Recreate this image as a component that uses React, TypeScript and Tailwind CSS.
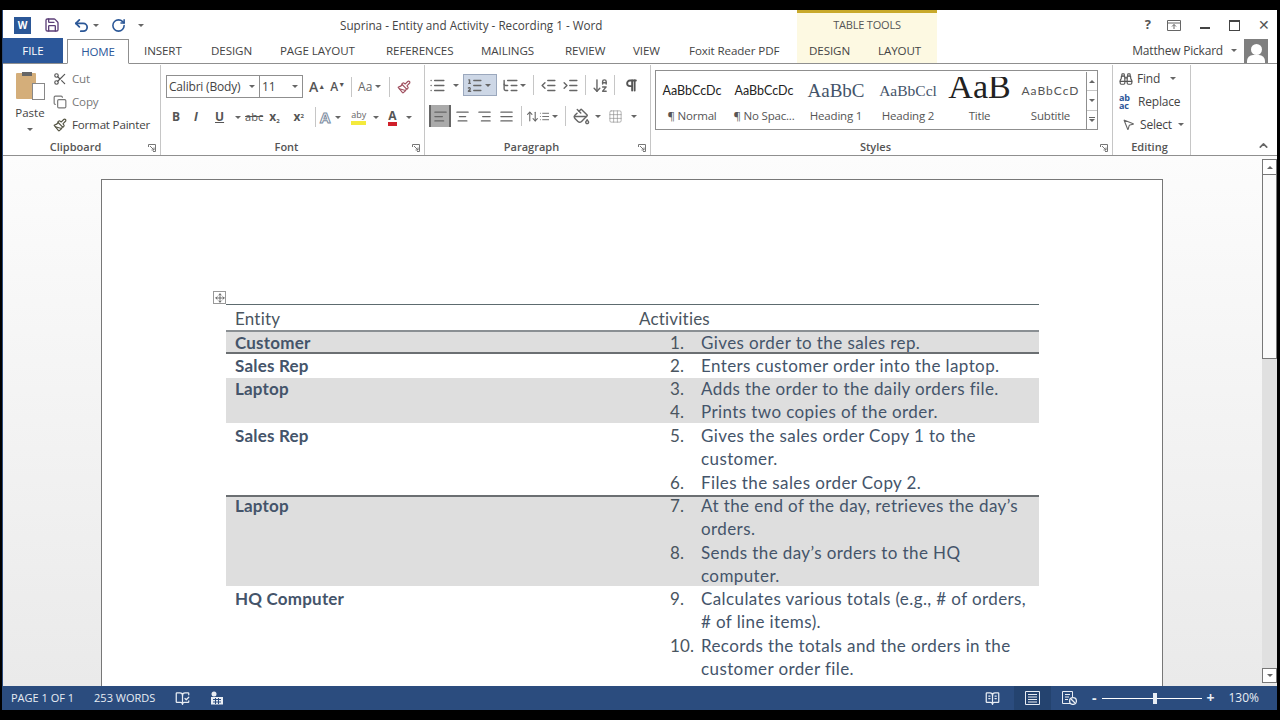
import type { ReactNode } from 'react';
import {
  AlignCenter,
  AlignJustify,
  AlignLeft,
  AlignRight,
  ArrowDownAZ,
  ArrowUpDown,
  Binoculars,
  BookOpenCheck,
  BookOpenText,
  ChevronUp,
  Copy,
  Grid3x3,
  IndentDecrease,
  IndentIncrease,
  List,
  ListOrdered,
  ListTree,
  MousePointer2,
  Move,
  PaintBucket,
  Paintbrush,
  Pilcrow,
  RotateCw,
  Save,
  Scissors,
  Undo2,
} from 'lucide-react';

const UI = 'font-["Open_Sans","Liberation_Sans",sans-serif]';
const DOC = 'font-["Lato","Liberation_Sans",sans-serif]';

function Caret({ className = '' }: { className?: string }) {
  return <span className={`inline-block h-0 w-0 shrink-0 border-x-[3px] border-t-[3px] border-x-transparent border-t-[#666] ${className}`} />;
}

function Launcher() {
  return (
    <svg width="8" height="8" viewBox="0 0 8 8" className="shrink-0 text-[#777]">
      <path d="M.5 3V.5H7.5V7.5H5M2 2l4 4M6 3.5V6H3.5" fill="none" stroke="currentColor" strokeWidth="1" />
    </svg>
  );
}

function Sep({ className = '' }: { className?: string }) {
  return <span className={`h-[20px] w-px shrink-0 bg-[#c6c6c6] ${className}`} />;
}

function Group({ label, width, launcher, children }: { label: string; width: string; launcher?: boolean; children: ReactNode }) {
  return (
    <div className={`${width} flex h-[90px] shrink-0 flex-col border-r border-[#c6c6c6]`}>
      <div className="min-h-0 flex-1">{children}</div>
      <div className="flex h-[15px] items-center pr-[4px] text-[11px] font-semibold text-[#555]">
        <span className="flex-1 text-center">{label}</span>
        {launcher && <Launcher />}
      </div>
    </div>
  );
}

function Tab({ children, className = '' }: { children: ReactNode; className?: string }) {
  return <span className={`text-[11.6px] tracking-[-0.1px] whitespace-nowrap text-[#444] ${className}`}>{children}</span>;
}

function StyleItem({ sample, label, w, sampleClass }: { sample: string; label: string; w: string; sampleClass: string }) {
  return (
    <div className={`${w} flex shrink-0 flex-col items-center overflow-hidden`}>
      <div className={`flex w-full items-center justify-center overflow-hidden whitespace-nowrap ${sampleClass}`}>{sample}</div>
      <div className="text-[11.5px] leading-[16px] tracking-[-0.2px] text-[#555]">{label}</div>
    </div>
  );
}

function MacroIcon() {
  return (
    <svg width="14" height="14" viewBox="0 0 14 14" className="ml-[20px]">
      <circle cx="4" cy="3" r="2.5" fill="#e8edf4" />
      <path d="M1 6h12v7.5H1z" fill="#e8edf4" />
      <path d="M3 8.5h8M3 11h8M5.5 7v6M8.5 7v6" stroke="#2b4c7e" strokeWidth="1" />
    </svg>
  );
}

function PrintIcon() {
  return (
    <svg width="15" height="14" viewBox="0 0 15 14">
      <path d="M.5.5h14v13H.5z" fill="none" stroke="#e8edf4" />
      <path d="M3 3.5h9M3 6h9M3 8.5h9M3 11h9" stroke="#e8edf4" />
    </svg>
  );
}

function WebIcon() {
  return (
    <svg width="15" height="14" viewBox="0 0 15 14" className="ml-[11px]">
      <path d="M8 12.5H.5V.5h10V6" fill="none" stroke="#e8edf4" />
      <path d="M3 3.5h5M3 6h4M3 8.5h3" stroke="#e8edf4" />
      <circle cx="11" cy="10" r="3.4" fill="none" stroke="#e8edf4" strokeWidth="1.3" />
      <path d="M9 8l4 4" stroke="#e8edf4" strokeWidth="1.2" />
    </svg>
  );
}

type Row = { n: string; lines: string[] };
type Band = { entity: string; rows: Row[]; className: string };

const BANDS: Band[] = [
  { entity: 'Customer', className: 'h-[24px] pt-[1px] bg-[#dedede] shadow-[inset_0_2px_0_#8a8f93,inset_0_-2px_0_#6b6f72]', rows: [{ n: '1.', lines: ['Gives order to the sales rep.'] }] },
  { entity: 'Sales Rep', className: 'h-[24px]', rows: [{ n: '2.', lines: ['Enters customer order into the laptop.'] }] },
  { entity: 'Laptop', className: 'h-[45px] bg-[#dedede] [&>*]:-translate-y-px', rows: [{ n: '3.', lines: ['Adds the order to the daily orders file.'] }, { n: '4.', lines: ['Prints two copies of the order.'] }] },
  { entity: 'Sales Rep', className: 'h-[72px] pt-[1px]', rows: [{ n: '5.', lines: ['Gives the sales order Copy 1 to the', 'customer.'] }, { n: '6.', lines: ['Files the sales order Copy 2.'] }] },
  { entity: 'Laptop', className: 'h-[91px] bg-[#dedede] shadow-[inset_0_2px_0_#6b6f72] [&>*]:-translate-y-px', rows: [{ n: '7.', lines: ['At the end of the day, retrieves the day’s', 'orders.'] }, { n: '8.', lines: ['Sends the day’s orders to the HQ', 'computer.'] }] },
  { entity: 'HQ Computer', className: 'h-[94px] pt-[1px]', rows: [{ n: '9.', lines: ['Calculates various totals (e.g., # of orders,', '# of line items).'] }, { n: '10.', lines: ['Records the totals and the orders in the', 'customer order file.'] }] },
];

export default function App() {
  return (
    <div className={`flex h-[720px] w-[1280px] flex-col overflow-hidden bg-black ${UI}`}>
      <div className="h-[10px] shrink-0" />
      <div className="ml-[2px] mr-[3px] flex h-[700px] flex-col border-l border-[#2b4c7e] bg-white">
        {/* title bar */}
        <div className="flex h-[28px] shrink-0 items-center pt-[2px]">
          <div className="ml-[11px] flex h-[17px] w-[17px] items-center justify-center bg-[#2b5797] text-[10px] font-bold text-white">W</div>
          <Save size={16} strokeWidth={2} className="ml-[13px] text-[#5c3f78]" />
          <Undo2 size={17} strokeWidth={2.5} className="ml-[13px] text-[#2b5797]" />
          <Caret className="ml-[3px]" />
          <RotateCw size={15} strokeWidth={2.5} className="ml-[12px] text-[#2b5797]" />
          <Caret className="ml-[12px]" />
          <div className="ml-[196px] mt-[1px] w-[300px] text-[11.7px] text-[#444]">Suprina - Entity and Activity - Recording 1 - Word</div>
          <div className="-mt-[2px] ml-[157px] flex h-[28px] w-[140px] items-center justify-center self-start border-t-[3px] border-[#c8a92b] bg-[#fdf9e2] text-[11px] tracking-[-0.2px] text-[#555]">TABLE TOOLS</div>
          <div className="ml-auto flex items-center gap-[16px] pr-[7px] text-[#555]">
            <span className="text-[13px] font-bold">?</span>
            <svg width="14" height="11" viewBox="0 0 14 11"><path d="M.5.5h13v10H.5zM.5 3h13M7 9V4.5M5 6.5l2-2 2 2" fill="none" stroke="#666" /></svg>
            <span className="ml-[3px] mt-[5px] h-[2px] w-[10px] bg-[#444]" />
            <span className="ml-[3px] h-[11px] w-[11px] border border-t-2 border-[#444]" />
            <span className="ml-[2px] text-[14px] leading-none">✕</span>
          </div>
        </div>
        {/* tabs */}
        <div className="relative flex h-[26px] shrink-0 items-end border-b border-[#8f8f8f]">
          <div className="flex h-[25px] w-[60px] items-center justify-center bg-[#2b579a] text-[11.5px] text-white">FILE</div>
          <div className="-mb-px ml-[4px] flex h-[25px] w-[62px] items-center justify-center border border-b-white border-[#8f8f8f] bg-white text-[11.5px] tracking-[-0.2px] text-[#2b579a]">HOME</div>
          <div className="flex h-[25px] items-center">
            <Tab className="ml-[15px] w-[53px]">INSERT</Tab>
            <Tab className="ml-[14px] w-[52px]">DESIGN</Tab>
            <Tab className="ml-[17px] w-[92px]">PAGE LAYOUT</Tab>
            <Tab className="ml-[14px] w-[85px]">REFERENCES</Tab>
            <Tab className="ml-[10px] w-[70px]">MAILINGS</Tab>
            <Tab className="ml-[14px] w-[54px]">REVIEW</Tab>
            <Tab className="ml-[14px] w-[42px]">VIEW</Tab>
            <Tab className="ml-[14px] w-[91px]">Foxit Reader PDF</Tab>
          </div>
          <div className="ml-[17px] flex h-[25px] w-[140px] items-center bg-[#fdf9e2]">
            <Tab className="ml-[12px] w-[40px]">DESIGN</Tab>
            <Tab className="ml-[29px]">LAYOUT</Tab>
          </div>
          <div className="ml-auto flex h-[25px] items-center pr-[9px]">
            <span className="text-[12px] tracking-[-0.2px] text-[#444]">Matthew Pickard</span>
            <Caret className="ml-[8px]" />
            <div className="ml-[7px] flex h-[24px] w-[24px] flex-col items-center justify-end overflow-hidden bg-[#7f7f7f]">
              <span className="h-[11px] w-[11px] rounded-full bg-white" />
              <span className="h-[8px] w-[18px] rounded-t-[6px] bg-white" />
            </div>
          </div>
        </div>
        {/* ribbon */}
        <div className="flex h-[92px] shrink-0 items-start border-b border-[#8f8f8f] pt-[1px] text-[#444]">
          <Group label="Clipboard" width="w-[158px]" launcher>
            <div className="flex pl-[12px] pt-[3px]">
              <div className="mt-[5px] flex w-[30px] flex-col items-center">
                <div className="relative h-[28px] w-[28px]">
                  <div className="h-[26px] w-[20px] rounded-[1px] bg-[#d4ae7a]" />
                  <div className="absolute left-[6px] top-[-1px] h-[4px] w-[10px] bg-[#666]" />
                  <div className="absolute left-[16px] top-[10px] h-[17px] w-[13px] border border-[#888] bg-white" />
                </div>
                <span className="mt-[5px] text-[11.5px] leading-[14px]">Paste</span>
                <Caret className="mt-[8px]" />
              </div>
              <div className="ml-[8px] flex flex-col gap-[4px] pt-[1px] text-[11.6px] leading-[19px] tracking-[-0.2px]">
                <div className="flex items-center gap-[5px]"><Scissors size={14} className="text-[#555]" /><span className="text-[#777]">Cut</span></div>
                <div className="flex items-center gap-[5px]"><Copy size={14} className="text-[#777]" /><span className="text-[#777]">Copy</span></div>
                <div className="flex items-center gap-[5px]"><Paintbrush size={14} className="text-[#554]" /><span>Format Painter</span></div>
              </div>
            </div>
          </Group>
          <Group label="Font" width="w-[264px]" launcher>
            <div className="pl-[5px] pt-[10px]">
              <div className="flex items-center">
                <div className="flex h-[23px] w-[94px] items-center justify-between border border-[#8f8f8f] pl-[2px] pr-[4px] text-[12px] tracking-[-0.2px]">Calibri (Body)<Caret /></div>
                <div className="-ml-px flex h-[23px] w-[44px] items-center justify-between border border-[#8f8f8f] pl-[2px] pr-[4px] text-[12px]">11<Caret /></div>
                <span className="ml-[6px] text-[14px] font-semibold text-[#555]">A<sup className="text-[7px]">▲</sup></span>
                <span className="ml-[5px] text-[12px] font-semibold text-[#555]">A<sup className="text-[7px]">▼</sup></span>
                <Sep className="ml-[6px]" />
                <span className="ml-[6px] text-[12px] text-[#666]">Aa</span>
                <Caret className="ml-[3px]" />
                <Sep className="ml-[8px]" />
                <Paintbrush size={14} className="ml-[7px] text-[#a05060]" />
              </div>
              <div className="mt-[9px] flex items-center pl-[2px] text-[#555]">
                <span className="w-[16px] text-center text-[12px] font-bold">B</span>
                <span className="ml-[6px] w-[12px] text-center text-[12px] font-bold italic">I</span>
                <span className="ml-[13px] text-[12px] font-bold underline">U</span>
                <Caret className="ml-[11px]" />
                <span className="ml-[4px] text-[11px] line-through">abc</span>
                <span className="ml-[6px] text-[12px] font-bold">x<sub className="text-[6px]">2</sub></span>
                <span className="ml-[14px] text-[12px] font-bold">x<sup className="text-[6px]">2</sup></span>
                <Sep className="ml-[11px]" />
                <span className="ml-[4px] text-[15px] font-bold leading-none text-white [-webkit-text-stroke:1px_#7b8ba0]">A</span>
                <Caret className="ml-[5px]" />
                <span className="ml-[10px] border-b-[4px] border-[#f4ea3c] text-[9px] leading-[12px] text-[#666]">aby</span>
                <Caret className="ml-[7px]" />
                <span className="ml-[9px] border-b-[4px] border-[#d0202a] text-[12px] font-bold leading-[13px] text-[#555]">A</span>
                <Caret className="ml-[9px]" />
              </div>
            </div>
          </Group>
          <Group label="Paragraph" width="w-[226px]" launcher>
            <div className="pl-[4px] pt-[8px]">
              <div className="flex h-[24px] items-center text-[#666]">
                <List size={17} />
                <Caret className="ml-[7px]" />
                <div className="ml-[4px] flex h-[22px] w-[34px] items-center gap-[2px] border border-[#9ba8bd] bg-[#cdd7e6] pl-[2px]"><ListOrdered size={17} /><Caret /></div>
                <ListTree size={17} className="ml-[5px]" />
                <Caret className="ml-[1px]" />
                <Sep className="ml-[7px]" />
                <IndentDecrease size={17} className="ml-[6px]" />
                <IndentIncrease size={17} className="ml-[5px]" />
                <Sep className="ml-[6px]" />
                <ArrowDownAZ size={17} className="ml-[6px]" />
                <Sep className="ml-[5px]" />
                <Pilcrow size={15} strokeWidth={3} className="ml-[9px] text-[#555]" />
              </div>
              <div className="mt-[7px] flex h-[24px] items-center text-[#666]">
                <div className="flex h-[22px] w-[22px] shrink-0 items-center justify-center border-x-2 border-[#666] bg-[#aaa]"><AlignLeft size={15} /></div>
                <AlignCenter size={15} className="ml-[4px]" />
                <AlignRight size={15} className="ml-[7px]" />
                <AlignJustify size={15} className="ml-[7px]" />
                <Sep className="ml-[7px]" />
                <ArrowUpDown size={13} className="ml-[4px]" />
                <List size={11} />
                <Caret className="ml-[2px]" />
                <Sep className="ml-[7px]" />
                <PaintBucket size={17} className="ml-[7px]" />
                <Caret className="ml-[5px]" />
                <Grid3x3 size={15} strokeWidth={1} className="ml-[7px] text-[#888]" />
                <Caret className="ml-[8px]" />
              </div>
            </div>
          </Group>
          <Group label="Styles" width="w-[462px]" launcher>
            <div className="ml-[4px] mt-[5px] flex h-[60px] w-[443px] border border-[#8f8f8f] pt-[1px]">
              <StyleItem w="w-[72px]" sample="AaBbCcDc" label="¶ Normal" sampleClass={`h-[36px] pt-[2px] text-[12.5px] text-[#222] ${DOC}`} />
              <StyleItem w="w-[72px]" sample="AaBbCcDc" label="¶ No Spac..." sampleClass={`h-[36px] pt-[2px] text-[12.5px] text-[#222] ${DOC}`} />
              <StyleItem w="w-[72px]" sample="AaBbC" label="Heading 1" sampleClass='h-[36px] pt-[2px] text-[19px] text-[#44546a] font-["Liberation_Serif",serif]' />
              <StyleItem w="w-[72px]" sample="AaBbCcl" label="Heading 2" sampleClass='h-[36px] pt-[2px] text-[15.5px] text-[#44546a] font-["Liberation_Serif",serif]' />
              <StyleItem w="w-[71px]" sample="AaB" label="Title" sampleClass='mt-[5px] h-[31px] pb-[11px] text-[34px] leading-[26px] text-[#222] font-["Liberation_Serif",serif]' />
              <StyleItem w="w-[71px]" sample="AaBbCcD" label="Subtitle" sampleClass={`h-[36px] pt-[2px] text-[12px] tracking-[1px] text-[#555] ${DOC}`} />
              <div className="ml-auto flex w-[14px] flex-col border-l border-[#8f8f8f] text-[#666]">
                <div className="flex flex-1 items-center justify-center"><Caret className="rotate-180" /></div>
                <div className="flex flex-1 items-center justify-center border-y border-[#c6c6c6]"><Caret /></div>
                <div className="flex flex-1 flex-col items-center justify-center gap-px"><span className="h-px w-[6px] bg-[#666]" /><Caret /></div>
              </div>
            </div>
          </Group>
          <Group label="Editing" width="w-[78px]">
            <div className="flex flex-col gap-[4px] pl-[6px] pt-[4px] text-[12px] leading-[19px] tracking-[-0.2px]">
              <div className="flex items-center gap-[4px]"><Binoculars size={14} className="text-[#555]" />Find<Caret className="ml-[6px]" /></div>
              <div className="flex items-center gap-[4px]"><span className="w-[15px] text-[9px] font-bold leading-[8px] text-[#2b579a]">ab ac</span>Replace</div>
              <div className="flex items-center gap-[5px]"><MousePointer2 size={13} className="ml-[3px] text-[#666]" />Select<Caret className="ml-[1px]" /></div>
            </div>
          </Group>
          <div className="flex h-[90px] flex-1 items-end justify-end pb-[3px] pr-[7px]"><ChevronUp size={13} strokeWidth={3} className="text-[#666]" /></div>
        </div>
        {/* document */}
        <div className="flex min-h-0 flex-1 bg-linear-to-b from-[#fcfcfc] to-[#eaeaea]">
          <div className="min-w-0 flex-1 overflow-hidden pl-[98px] pt-[23px]">
            <div className="relative h-[700px] w-[1062px] border border-[#777] bg-white pl-[124px] pt-[124px]">
              <div className="absolute left-[111px] top-[111px] flex h-[13px] w-[13px] items-center justify-center border border-[#999] bg-white text-[#555]"><Move size={10} /></div>
              <div className={`w-[813px] border-t border-[#5d6b6f] text-[17px] tracking-[0.2px] text-[#44546a] ${DOC}`}>
                <div className="flex h-[25px] items-center pt-[2px] text-[#4a5560]">
                  <span className="w-[413px] pl-[9px]">Entity</span>
                  <span>Activities</span>
                </div>
                {BANDS.map((band, i) => (
                  <div key={i} className={`${band.className} flex leading-[23.3px]`}>
                    <div className="w-[444px] shrink-0 pl-[9px] font-bold">{band.entity}</div>
                    <div className="flex-1">
                      {band.rows.map((row) => (
                        <div key={row.n} className="flex">
                          <span className="w-[31px] shrink-0 text-[#4a5560]">{row.n}</span>
                          <div className="tracking-[0.4px]">
                            {row.lines.map((line) => (
                              <div key={line} className="whitespace-nowrap">{line}</div>
                            ))}
                          </div>
                        </div>
                      ))}
                    </div>
                  </div>
                ))}
              </div>
            </div>
          </div>
          {/* scrollbar */}
          <div className="flex w-[15px] shrink-0 flex-col py-[3px]">
            <div className="flex h-[16px] shrink-0 items-center justify-center border border-[#777] bg-white"><Caret className="rotate-180" /></div>
            <div className="min-h-0 flex-1 bg-[#e0e0e0]">
              <div className="h-[184px] border border-t-0 border-[#777] bg-[#fafafa]" />
            </div>
            <div className="flex h-[15px] shrink-0 items-center justify-center border border-[#777] bg-white"><Caret /></div>
          </div>
        </div>
        {/* status bar */}
        <div className="flex h-[24px] shrink-0 items-center bg-[#2b4c7e] text-[11px] text-[#e8edf4]">
          <span className="ml-[8px]">PAGE 1 OF 1</span>
          <span className="ml-[20px]">253 WORDS</span>
          <BookOpenCheck size={15} className="ml-[20px]" />
          <MacroIcon />
          <div className="ml-auto flex h-full items-center pr-[18px]">
            <BookOpenText size={15} />
            <div className="ml-[14px] flex h-full w-[37px] items-center justify-center bg-[#24436f]"><PrintIcon /></div>
            <WebIcon />
            <span className="ml-[15px] text-[14px] font-bold leading-none">-</span>
            <div className="relative ml-[6px] h-px w-[100px] bg-white">
              <span className="absolute left-[51px] top-[-5px] h-[11px] w-[4px] bg-[#e8edf4]" />
            </div>
            <span className="ml-[4px] text-[14px] font-bold leading-none">+</span>
            <span className="ml-[14px] text-[12px]">130%</span>
          </div>
        </div>
      </div>
      <div className="h-[10px] shrink-0" />
    </div>
  );
}
